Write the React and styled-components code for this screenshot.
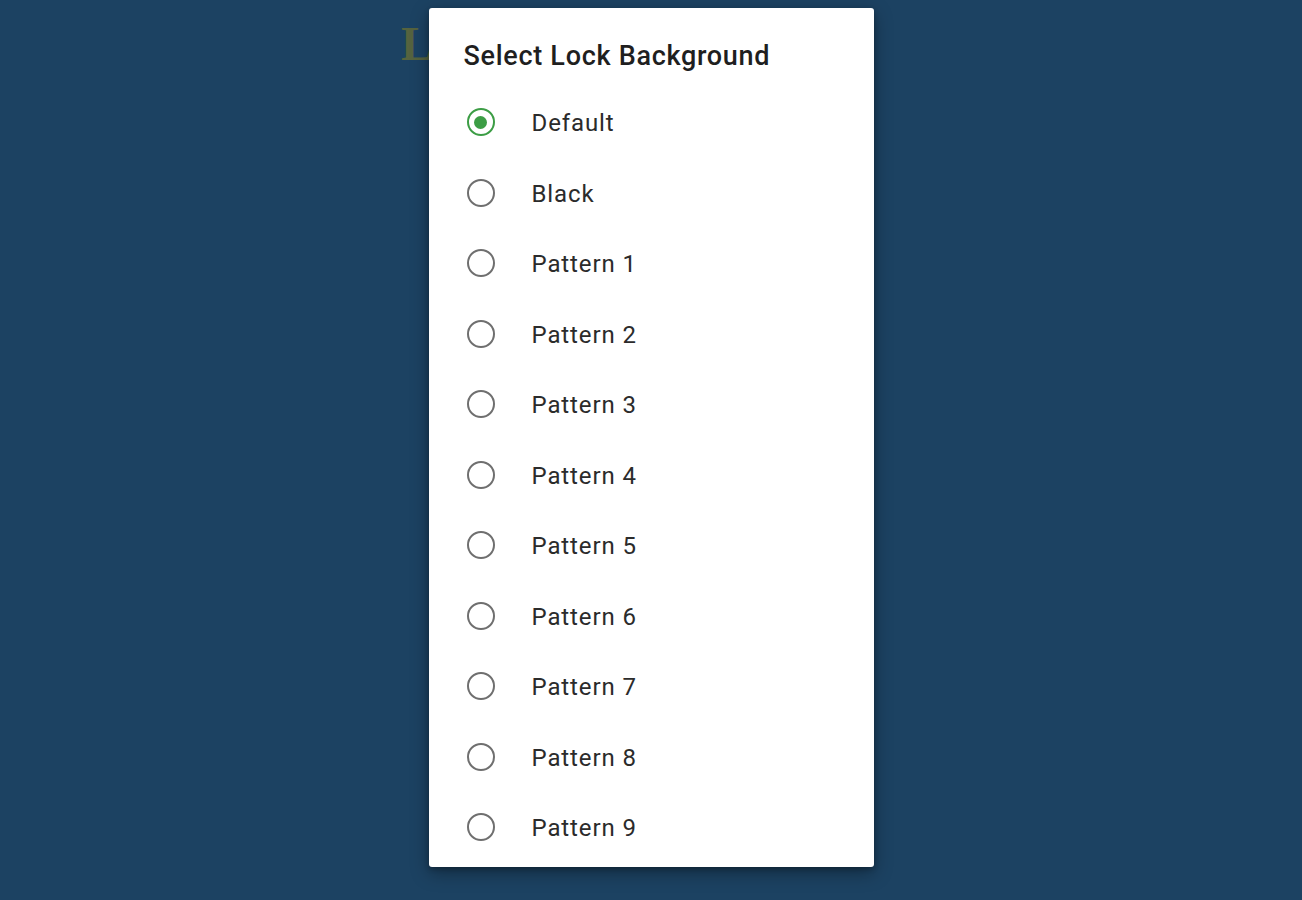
import React, { useState } from 'react';
import styled, { createGlobalStyle } from 'styled-components';

const GlobalStyle = createGlobalStyle`
  html, body {
    margin: 0;
    padding: 0;
    background: #1c4262;
  }
  body {
    font-family: Roboto, "Noto Sans", "Liberation Sans", sans-serif;
  }
`;

const Page = styled.div`
  position: relative;
  width: 1302px;
  height: 900px;
  background: #1c4262;
  overflow: hidden;
`;

// page heading, mostly hidden behind the dialog
const PageTitle = styled.h1`
  margin: 0;
  padding: 16px 0 0 401px;
  font-family: "Liberation Serif", serif;
  font-weight: 700;
  font-size: 48px;
  line-height: 56px;
  color: #56633f;
`;

const Overlay = styled.div`
  position: absolute;
  inset: 0;
  display: flex;
  justify-content: center;
  align-items: flex-start;
  padding-top: 8px;
`;

const Dialog = styled.div`
  width: 445px;
  height: 859px;
  box-sizing: border-box;
  background: #ffffff;
  border-radius: 3px;
  box-shadow: 0 6px 18px rgba(0, 0, 0, 0.35), 0 2px 5px rgba(0, 0, 0, 0.25);
  padding: 30px 0 4px 0;
  display: flex;
  flex-direction: column;
`;

const Title = styled.h2`
  margin: 0 0 13px 35px;
  font-size: 27px;
  line-height: 36px;
  font-weight: 500;
  letter-spacing: 0.7px;
  color: #1f1f1f;
`;

const Options = styled.div`
  display: flex;
  flex-direction: column;
`;

const Option = styled.label`
  display: flex;
  align-items: center;
  height: 70.5px;
  padding-left: 38px;
  gap: 37px;
  cursor: pointer;
`;

const Radio = styled.span`
  width: 28px;
  height: 28px;
  box-sizing: border-box;
  border-radius: 50%;
  border: 2px solid ${p => (p.checked ? '#3c9d45' : '#6f6f6f')};
  display: flex;
  align-items: center;
  justify-content: center;
  flex-shrink: 0;

  &::after {
    content: '';
    width: 13px;
    height: 13px;
    border-radius: 50%;
    background: #3c9d45;
    display: ${p => (p.checked ? 'block' : 'none')};
  }
`;

const Label = styled.span`
  font-size: 24px;
  font-weight: 400;
  letter-spacing: 0.9px;
  color: #2b2b2b;
  padding-top: 2px;
`;

const options = [
  'Default',
  'Black',
  'Pattern 1',
  'Pattern 2',
  'Pattern 3',
  'Pattern 4',
  'Pattern 5',
  'Pattern 6',
  'Pattern 7',
  'Pattern 8',
  'Pattern 9',
];

const App = () => {
  const [selected, setSelected] = useState('Default');

  return (
    <Page>
      <GlobalStyle />
      <PageTitle>Lock Screen</PageTitle>
      <Overlay>
        <Dialog>
          <Title>Select Lock Background</Title>
          <Options>
            {options.map(name => (
              <Option key={name} onClick={() => setSelected(name)}>
                <Radio checked={selected === name} />
                <Label>{name}</Label>
              </Option>
            ))}
          </Options>
        </Dialog>
      </Overlay>
    </Page>
  );
};

export default App;
